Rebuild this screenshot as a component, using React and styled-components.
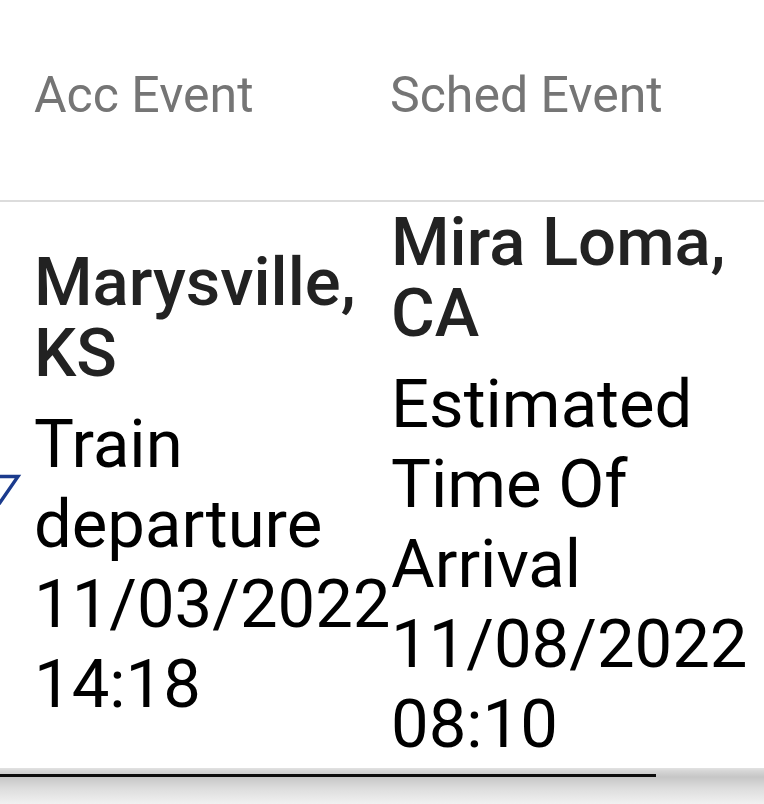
import React from 'react'
import styled, { createGlobalStyle } from 'styled-components'

const GlobalStyle = createGlobalStyle`
  html, body {
    margin: 0;
    padding: 0;
    background: #ffffff;
    font-family: Roboto, "Noto Sans", "Liberation Sans", sans-serif;
  }
`

const events = [
  {
    acc: { place: 'Marysville, KS', event: 'Train departure', date: '11/03/2022', time: '14:18' },
    sched: { place: 'Mira Loma, CA', event: 'Estimated Time Of Arrival', date: '11/08/2022', time: '08:10' }
  }
]

function NavIcon() {
  return (
    <svg width="44" height="44" viewBox="0 0 44 44" fill="none">
      <path d="M2 12.5 L40 12.5 L21 40" stroke="#1b3b8d" strokeWidth="3.4" strokeLinejoin="miter" />
    </svg>
  )
}

function Cell({ data, align }) {
  return (
    <DataCell $align={align}>
      <Stack>
        <Place>{data.place}</Place>
        <Detail>
          {data.event} {data.date} {data.time}
        </Detail>
      </Stack>
    </DataCell>
  )
}

export default function App() {
  return (
    <>
      <GlobalStyle />
      <Viewport>
        <Table>
          <HeaderRow>
            <IconCell />
            <HeadCell>Acc Event</HeadCell>
            <HeadCell>Sched Event</HeadCell>
          </HeaderRow>
          {events.map((row, i) => (
            <BodyRow key={i}>
              <IconCell>
                <IconSlot>
                  <NavIcon />
                </IconSlot>
              </IconCell>
              <Cell data={row.acc} align="center" />
              <Cell data={row.sched} align="start" />
            </BodyRow>
          ))}
        </Table>
        <ScrollTrack>
          <ScrollThumb />
        </ScrollTrack>
      </Viewport>
    </>
  )
}

const Viewport = styled.div`
  width: 764px;
  height: 804px;
  overflow: hidden;
  display: flex;
  flex-direction: column;
  background: #ffffff;
`

const Table = styled.div`
  display: flex;
  flex-direction: column;
`

const rowGrid = `
  display: grid;
  grid-template-columns: 18px 358px 388px;
`

const HeaderRow = styled.div`
  ${rowGrid}
  height: 202px;
  align-items: center;
  padding-bottom: 11px;
  box-sizing: border-box;
  border-bottom: 2px solid #dcdcdc;
`

const HeadCell = styled.div`
  padding-left: 16px;
  font-size: 50px;
  color: #757575;
  white-space: nowrap;
  & + & {
    padding-left: 14px;
  }
`

const BodyRow = styled.div`
  ${rowGrid}
  padding: 5px 0 4px;
`

const IconCell = styled.div`
  display: flex;
  align-items: center;
  justify-content: flex-end;
  overflow: visible;
`

const IconSlot = styled.div`
  display: flex;
  margin-top: 0;
  & > svg {
    margin-right: -4px;
    display: block;
  }
`

const DataCell = styled.div`
  display: flex;
  align-items: ${p => (p.$align === 'center' ? 'center' : 'flex-start')};
  padding-left: ${p => (p.$align === 'center' ? '16px' : '15px')};
  overflow: visible;
`

const Stack = styled.div`
  display: flex;
  flex-direction: column;
  gap: 15px;
`

const Place = styled.div`
  font-size: 67px;
  font-weight: 500;
  line-height: 71px;
  color: #222222;
`

const Detail = styled.div`
  font-size: 67px;
  font-weight: 400;
  line-height: 80px;
  color: #000000;
`

const ScrollTrack = styled.div`
  flex: 1;
  padding-top: 6px;
  background: linear-gradient(#e2e2e2 0, #d6d6d6 3px, #c6c6c6 9px, #dcdcdc 20px, #f1f1f1 100%);
`

const ScrollThumb = styled.div`
  width: 656px;
  height: 3px;
  background: #0d0d0d;
`
